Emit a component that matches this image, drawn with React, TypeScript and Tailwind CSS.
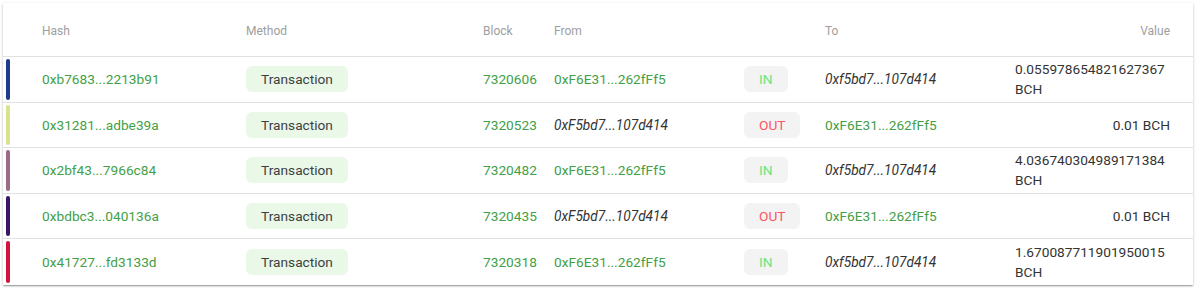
const rows = [
  {
    bar: 'bg-[#1e3a8a]',
    hash: '0xb7683...2213b91',
    block: '7320606',
    from: '0xF6E31...262fFf5',
    dir: 'IN',
    to: '0xf5bd7...107d414',
    value: '0.055978654821627367 BCH',
  },
  {
    bar: 'bg-[#d9e38c]',
    hash: '0x31281...adbe39a',
    block: '7320523',
    from: '0xF5bd7...107d414',
    dir: 'OUT',
    to: '0xF6E31...262fFf5',
    value: '0.01 BCH',
  },
  {
    bar: 'bg-[#9a6a86]',
    hash: '0x2bf43...7966c84',
    block: '7320482',
    from: '0xF6E31...262fFf5',
    dir: 'IN',
    to: '0xf5bd7...107d414',
    value: '4.036740304989171384 BCH',
  },
  {
    bar: 'bg-[#3b1368]',
    hash: '0xbdbc3...040136a',
    block: '7320435',
    from: '0xF5bd7...107d414',
    dir: 'OUT',
    to: '0xF6E31...262fFf5',
    value: '0.01 BCH',
  },
  {
    bar: 'bg-[#d3123f]',
    hash: '0x41727...fd3133d',
    block: '7320318',
    from: '0xF6E31...262fFf5',
    dir: 'IN',
    to: '0xf5bd7...107d414',
    value: '1.670087711901950015 BCH',
  },
]

const cols = 'grid grid-cols-[39px_204px_237px_71px_190px_81px_190px_1fr] items-center pr-[23px]'

// own wallet shows in italic dark, counterpart in green
function Address({ text, dir, side }: { text: string; dir: string; side: 'from' | 'to' }) {
  const mine = (dir === 'IN' && side === 'to') || (dir === 'OUT' && side === 'from')
  return mine ? (
    <span className="italic text-[#333333]">{text}</span>
  ) : (
    <span className="text-[#43a047]">{text}</span>
  )
}

export default function App() {
  return (
    <div className="w-[1200px] h-[293px] bg-white pt-[3px] pl-[3px] font-['Roboto',sans-serif]">
      <div className="w-[1190px] bg-white shadow-[0_1px_3px_rgba(0,0,0,0.2),0_1px_1px_rgba(0,0,0,0.14),0_2px_1px_-1px_rgba(0,0,0,0.12)]">
        {/* Header */}
        <div className={`${cols} h-[54px] pt-[2px] border-b border-[#e0e0e0] text-[12px] text-[#9e9e9e]`}>
          <div />
          <div>Hash</div>
          <div>Method</div>
          <div>Block</div>
          <div>From</div>
          <div />
          <div>To</div>
          <div className="text-right">Value</div>
        </div>

        {/* Rows */}
        {rows.map((r, i) => (
          <div
            key={r.hash}
            className={`${cols} h-[45.6px] text-[13.7px] ${i < rows.length - 1 ? 'border-b border-[#e0e0e0]' : ''}`}
          >
            <div className="h-full flex items-center pl-[3px] py-[2px]">
              <div className={`w-[4px] h-full rounded-full ${r.bar}`} />
            </div>
            <div className="text-[#43a047]">{r.hash}</div>
            <div>
              <span className="inline-flex items-center justify-center w-[102px] h-[26px] rounded-[6px] bg-[#eaf8e7] text-[#3c4043]">
                Transaction
              </span>
            </div>
            <div className="text-[#43a047]">{r.block}</div>
            <div>
              <Address text={r.from} dir={r.dir} side="from" />
            </div>
            <div>
              {r.dir === 'IN' ? (
                <span className="inline-flex items-center h-[26px] px-[15px] rounded-[6px] bg-[#f2f3f2] text-[#6ee27e]">
                  IN
                </span>
              ) : (
                <span className="inline-flex items-center h-[26px] px-[15px] rounded-[6px] bg-[#f2f3f2] text-[#ff5563]">
                  OUT
                </span>
              )}
            </div>
            <div>
              <Address text={r.to} dir={r.dir} side="to" />
            </div>
            <div className="flex justify-end text-[#333333] leading-[20px]">
              <span className="text-left">{r.value}</span>
            </div>
          </div>
        ))}
      </div>
    </div>
  )
}
